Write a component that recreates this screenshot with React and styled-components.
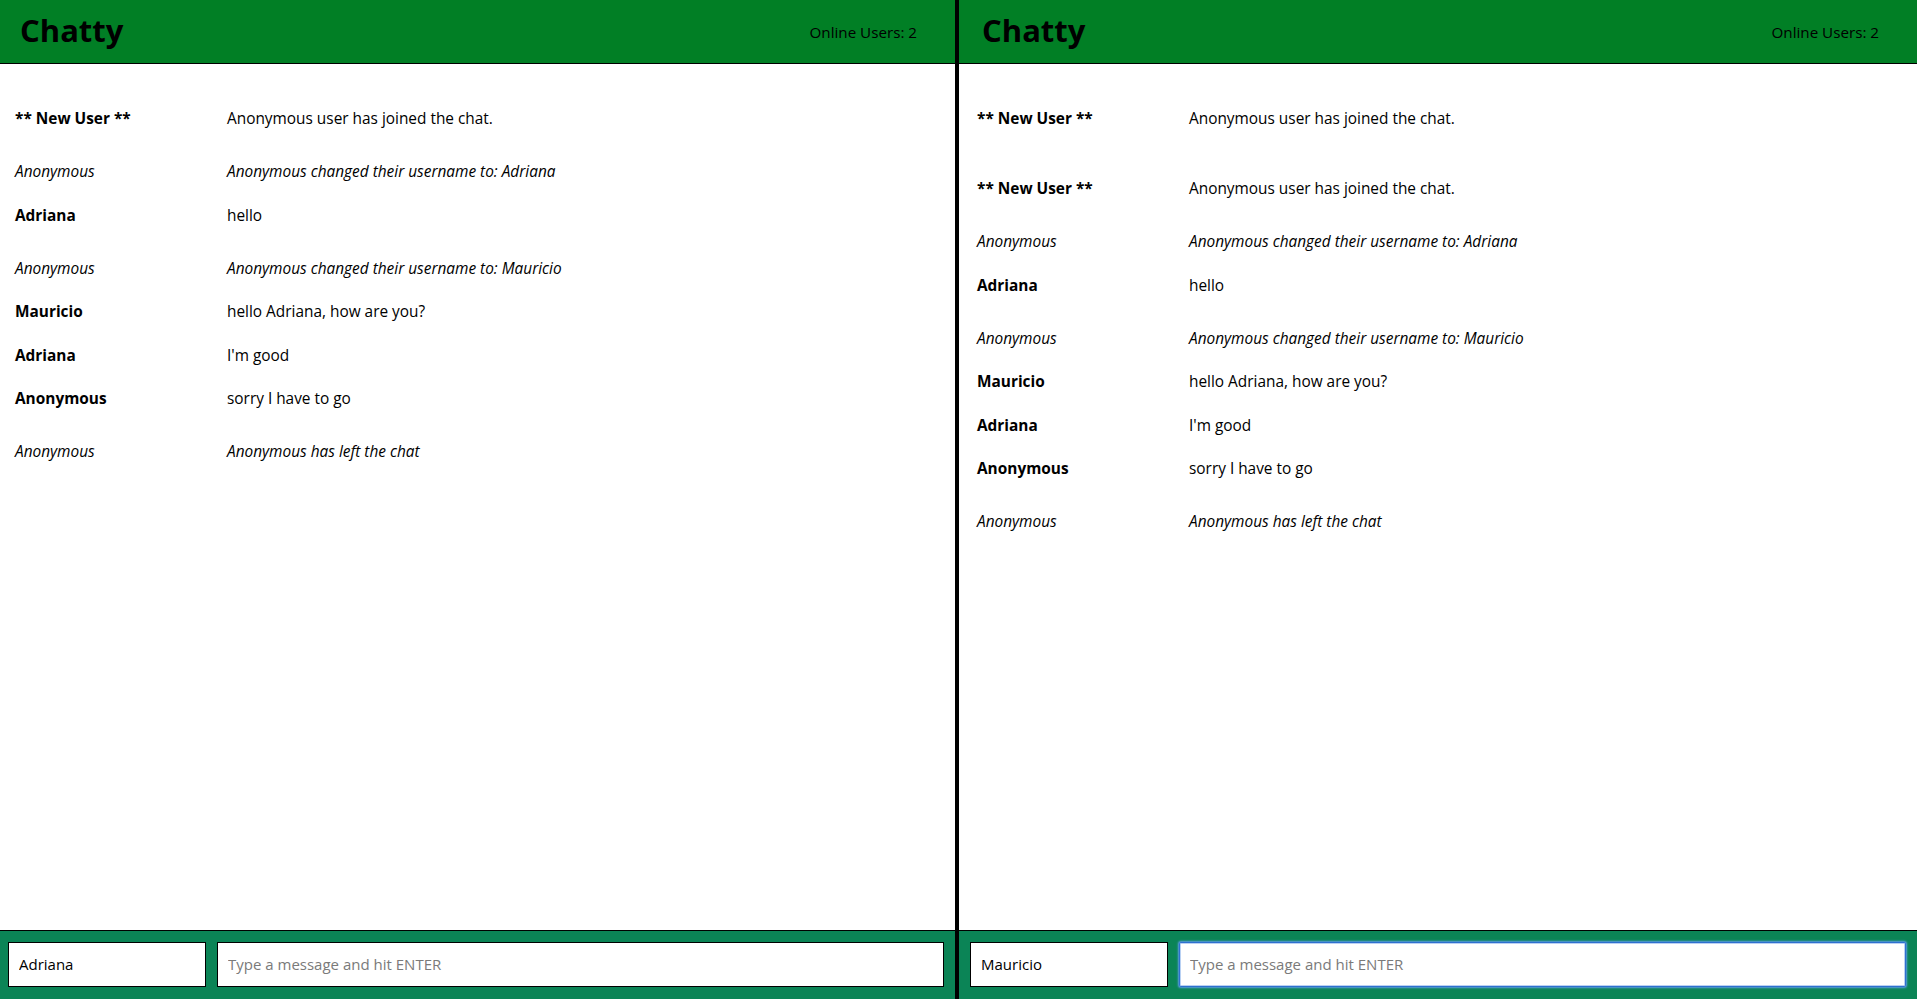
import React from "react";
import styled, { createGlobalStyle, css } from "styled-components";

const headerGreen = "#017f25";
const footerGreen = "#0b8456";

const GlobalStyle = createGlobalStyle`
  html, body {
    margin: 0;
    padding: 0;
    height: 100%;
    overflow: hidden;
    background: #fff;
  }
  body {
    font-family: "Open Sans", "Liberation Sans", sans-serif;
    color: #000;
  }
`;

const Screen = styled.div`
  display: flex;
  width: 1917px;
  height: 100vh;
  overflow: hidden;
`;

const Divider = styled.div`
  flex: 0 0 4px;
  background: #000;
`;

const Pane = styled.div`
  flex: 0 0 958px;
  display: flex;
  flex-direction: column;
  height: 100%;
  margin-left: ${props => (props.$clipped ? "-3px" : "0")};
`;

const NavBar = styled.nav`
  display: flex;
  align-items: center;
  justify-content: space-between;
  height: 63px;
  padding: 0 38px 0 23px;
  background: ${headerGreen};
  border-bottom: 1px solid #000;
`;

const Brand = styled.h1`
  margin: 0;
  font-size: 31px;
  font-weight: 700;
  line-height: 1;
  position: relative;
  top: -1px;
`;

const OnlineCount = styled.span`
  font-size: 15.2px;
`;

const MessageList = styled.main`
  flex: 1;
  padding: 44px 0 0 18px;
  overflow: hidden;
`;

const rowGap = {
  message: "21.5px",
  system: "31px",
  join: "48px"
};

const Row = styled.div`
  display: flex;
  height: 22px;
  line-height: 22px;
  font-size: 15.4px;
  margin-top: ${props => rowGap[props.$kind]};
  &:first-child {
    margin-top: 0;
  }
  ${props =>
    props.$kind === "system" &&
    css`
      font-style: italic;
    `}
`;

const Username = styled.span`
  flex: 0 0 212px;
  font-weight: ${props => (props.$kind === "system" ? 400 : 700)};
`;

const Content = styled.span`
  flex: 1;
`;

const Composer = styled.footer`
  display: flex;
  gap: 11px;
  height: 45px;
  padding: 11px 11px 12px;
  background: ${footerGreen};
  border-top: 1px solid #000;
`;

const Field = styled.input`
  box-sizing: border-box;
  min-width: 0;
  height: 45px;
  padding: 0 10px 2px;
  border: 1px solid #000;
  border-radius: 0;
  background: #fff;
  outline: none;
  font-family: "Open Sans", "Liberation Sans", sans-serif;
  font-size: 15px;
  color: #000;
  ${props =>
    props.$wide
      ? css`
          flex: 1 1 auto;
          width: 0;
        `
      : css`
          flex: 0 0 198px;
          width: 198px;
        `}
  &::placeholder {
    color: #7a7a7a;
  }
  ${props =>
    props.$focused &&
    css`
      border: 1px solid #2f6fcf;
      border-radius: 2px;
      box-shadow: inset 0 0 0 1px #b9d1f3, 0 0 2px 1px #5c9be8;
    `}
`;

const leftMessages = [
  { kind: "join", user: "** New User **", text: "Anonymous user has joined the chat." },
  { kind: "system", user: "Anonymous", text: "Anonymous changed their username to: Adriana" },
  { kind: "message", user: "Adriana", text: "hello" },
  { kind: "system", user: "Anonymous", text: "Anonymous changed their username to: Mauricio" },
  { kind: "message", user: "Mauricio", text: "hello Adriana, how are you?" },
  { kind: "message", user: "Adriana", text: "I'm good" },
  { kind: "message", user: "Anonymous", text: "sorry I have to go" },
  { kind: "system", user: "Anonymous", text: "Anonymous has left the chat" }
];

const rightMessages = [
  { kind: "join", user: "** New User **", text: "Anonymous user has joined the chat." },
  ...leftMessages
];

const ChatWindow = ({ messages, username, focused, clipped }) => (
  <Pane $clipped={clipped}>
    <NavBar>
      <Brand>Chatty</Brand>
      <OnlineCount>Online Users: 2</OnlineCount>
    </NavBar>
    <MessageList>
      {messages.map((msg, i) => (
        <Row key={i} $kind={msg.kind}>
          <Username $kind={msg.kind}>{msg.user}</Username>
          <Content>{msg.text}</Content>
        </Row>
      ))}
    </MessageList>
    <Composer>
      <Field defaultValue={username} />
      <Field $wide $focused={focused} placeholder="Type a message and hit ENTER" />
    </Composer>
  </Pane>
);

const App = () => (
  <>
    <GlobalStyle />
    <Screen>
      <ChatWindow messages={leftMessages} username="Adriana" clipped />
      <Divider />
      <ChatWindow messages={rightMessages} username="Mauricio" focused />
    </Screen>
  </>
);

export default App;
